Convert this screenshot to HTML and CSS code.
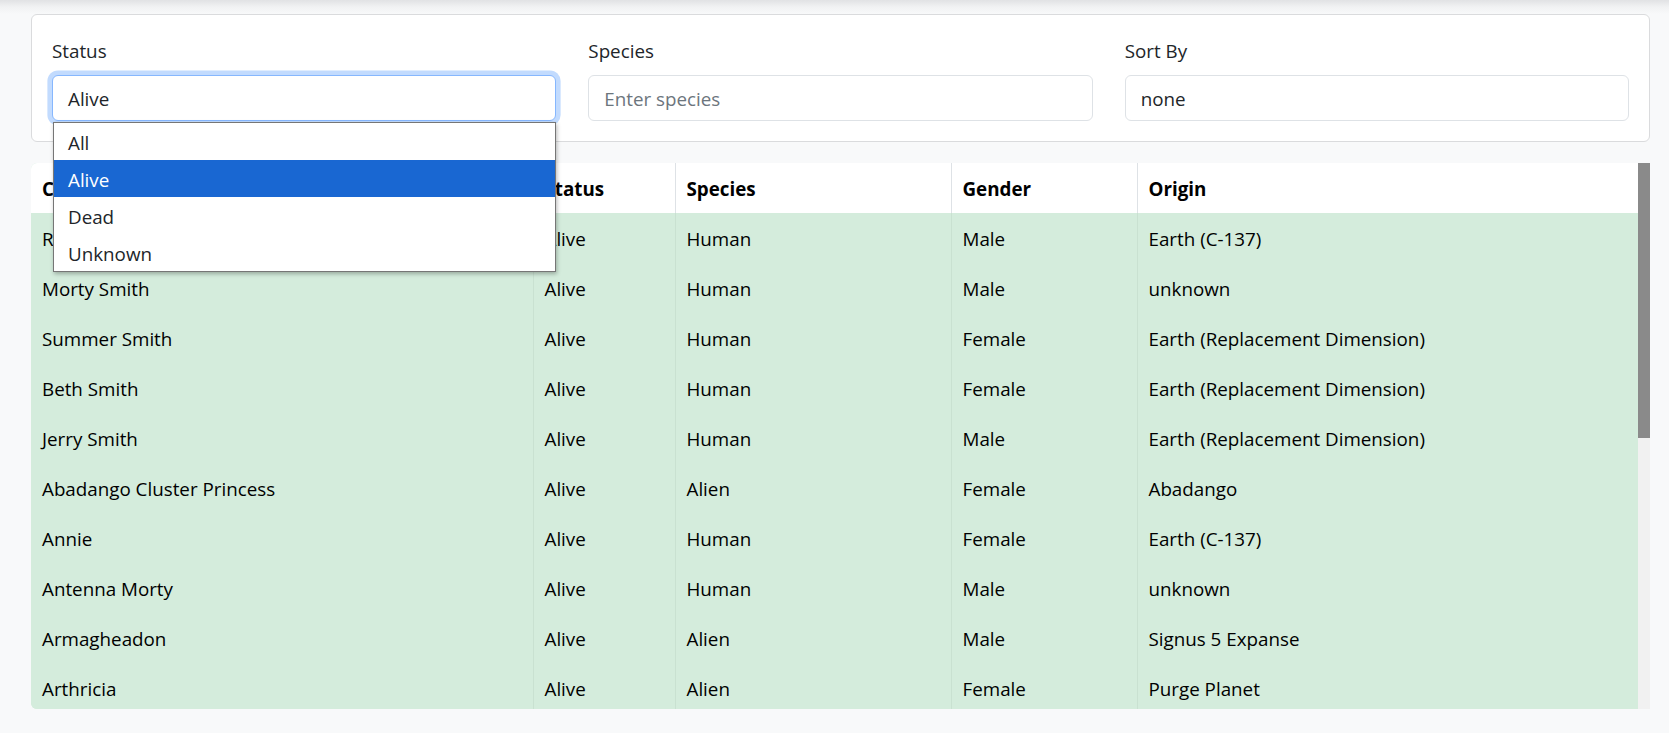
FILE: index.html
```html
<!DOCTYPE html>
<html lang="en">
<head>
<meta charset="utf-8">
<title>Characters</title>
<link rel="stylesheet" href="styles.css">
</head>
<body>
<div class="page">
  <section class="filters">
    <div class="field">
      <label class="field-label">Status</label>
      <div class="select-wrap">
        <div class="control is-focused">Alive</div>
        <ul class="dropdown">
          <li class="option">All</li>
          <li class="option is-selected">Alive</li>
          <li class="option">Dead</li>
          <li class="option">Unknown</li>
        </ul>
      </div>
    </div>
    <div class="field">
      <label class="field-label" for="species">Species</label>
      <input id="species" class="control" type="text" placeholder="Enter species">
    </div>
    <div class="field">
      <label class="field-label">Sort By</label>
      <div class="control">none</div>
    </div>
  </section>

  <div class="table-shell">
    <div class="table-wrap">
      <table class="characters">
        <colgroup>
          <col class="c-name"><col class="c-status"><col class="c-species"><col class="c-gender"><col class="c-origin">
        </colgroup>
        <thead>
          <tr><th>Character</th><th>Status</th><th>Species</th><th>Gender</th><th>Origin</th></tr>
        </thead>
        <tbody>
          <tr><td>Rick Sanchez</td><td>Alive</td><td>Human</td><td>Male</td><td>Earth (C-137)</td></tr>
          <tr><td>Morty Smith</td><td>Alive</td><td>Human</td><td>Male</td><td>unknown</td></tr>
          <tr><td>Summer Smith</td><td>Alive</td><td>Human</td><td>Female</td><td>Earth (Replacement Dimension)</td></tr>
          <tr><td>Beth Smith</td><td>Alive</td><td>Human</td><td>Female</td><td>Earth (Replacement Dimension)</td></tr>
          <tr><td>Jerry Smith</td><td>Alive</td><td>Human</td><td>Male</td><td>Earth (Replacement Dimension)</td></tr>
          <tr><td>Abadango Cluster Princess</td><td>Alive</td><td>Alien</td><td>Female</td><td>Abadango</td></tr>
          <tr><td>Annie</td><td>Alive</td><td>Human</td><td>Female</td><td>Earth (C-137)</td></tr>
          <tr><td>Antenna Morty</td><td>Alive</td><td>Human</td><td>Male</td><td>unknown</td></tr>
          <tr><td>Armagheadon</td><td>Alive</td><td>Alien</td><td>Male</td><td>Signus 5 Expanse</td></tr>
          <tr><td>Arthricia</td><td>Alive</td><td>Alien</td><td>Female</td><td>Purge Planet</td></tr>
          <tr><td>Artist Morty</td><td>Alive</td><td>Human</td><td>Male</td><td>unknown</td></tr>
          <tr><td>Attila Starwar</td><td>Alive</td><td>Human</td><td>Male</td><td>unknown</td></tr>
          <tr><td>Baby Legs</td><td>Alive</td><td>Human</td><td>Male</td><td>unknown</td></tr>
          <tr><td>Baby Poopybutthole</td><td>Alive</td><td>Poopybutthole</td><td>Male</td><td>unknown</td></tr>
          <tr><td>Benjamin</td><td>Alive</td><td>Poopybutthole</td><td>Male</td><td>Interdimensional Cable</td></tr>
          <tr><td>Bill</td><td>Alive</td><td>Human</td><td>Male</td><td>Earth (C-137)</td></tr>
          <tr><td>Blim Blam</td><td>Alive</td><td>Alien</td><td>Male</td><td>unknown</td></tr>
          <tr><td>Bruce Chutback</td><td>Alive</td><td>Human</td><td>Male</td><td>unknown</td></tr>
          <tr><td>Calypso</td><td>Alive</td><td>Human</td><td>Female</td><td>unknown</td></tr>
          <tr><td>Coach Feratu</td><td>Alive</td><td>Mythological Creature</td><td>Male</td><td>unknown</td></tr>
        </tbody>
      </table>
    </div>
    <div class="scrollbar" aria-hidden="true"><div class="scrollbar-thumb"></div></div>
  </div>
</div>
</body>
</html>
```

FILE: styles.css
```css
* { box-sizing: border-box; }

html, body { margin: 0; padding: 0; }

body {
  font-family: "Open Sans", "Noto Sans", "Liberation Sans", sans-serif;
  font-size: 18.8px;
  line-height: 27.6px;
  color: #212529;
  background: #f8f9fa linear-gradient(to bottom, #e1e2e4 0, #f1f2f3 7px, #f8f9fa 14px) no-repeat;
  height: 733px;
  overflow: hidden;
}

.page {
  padding: 14px 19px 0 31px;
}

/* ---------- filter card ---------- */
.filters {
  display: grid;
  grid-template-columns: repeat(3, 1fr);
  column-gap: 32px;
  padding: 23px 20px 20px 20px;
  background: #fff;
  border: 1px solid #dadbdd;
  border-radius: 6px;
}

.field-label {
  display: block;
  margin-bottom: 9px;
  color: #212529;
}

.select-wrap {
  position: relative;
}

.control {
  display: block;
  width: 100%;
  height: 46px;
  margin: 0;
  padding: 3px 15px 0 15px;
  font: inherit;
  line-height: 40px;
  color: #212529;
  background: #fff;
  border: 1px solid #dee2e6;
  border-radius: 6px;
  outline: none;
}

.control::placeholder {
  color: #6c757d;
  opacity: 1;
}

.control.is-focused {
  border-color: #86b7fe;
  box-shadow: 0 0 0 4.6px rgba(13, 110, 253, 0.25);
}

/* open list of the Status select */
.dropdown {
  position: absolute;
  top: 100%;
  left: 1px;
  right: 0;
  margin: 1px 0 0 0;
  padding: 0;
  list-style: none;
  background: #fff;
  border: 1px solid #767676;
  box-shadow: 1px 2px 4px rgba(0, 0, 0, 0.28);
  z-index: 10;
}

.option {
  height: 37px;
  padding: 4px 14px 0 14px;
  line-height: 33px;
  color: #212529;
}

.option.is-selected {
  background: #1967d2;
  color: #fff;
}

/* ---------- table ---------- */
.table-shell {
  display: flex;
  margin-top: 21px;
  height: 546px;
  border-radius: 6px 0 0 6px;
  overflow: hidden;
  background: #d4ecdc;
}

.table-wrap {
  flex: 1;
  min-width: 0;
  overflow: hidden;
}

.scrollbar {
  flex: 0 0 12px;
  display: flex;
  flex-direction: column;
  background: #f1f1f1;
}

.scrollbar-thumb {
  height: 275px;
  background: #8a8a8a;
}

.characters {
  width: 100%;
  table-layout: fixed;
  border-collapse: collapse;
  color: #000;
}

.c-name { width: 502px; }
.c-status { width: 142px; }
.c-species { width: 276px; }
.c-gender { width: 186px; }
.c-origin { width: auto; }

.characters th,
.characters td {
  height: 50px;
  padding: 12px 11px 10px 11px;
  line-height: 28px;
  text-align: left;
  white-space: nowrap;
  overflow: hidden;
}

.characters th {
  background: #fff;
  font-weight: 700;
  border-left: 1px solid #dee2e6;
}

.characters td {
  font-weight: 400;
  background: #d4ecdc;
  border-left: 1px solid #c9e1d1;
}

.characters th:first-child,
.characters td:first-child {
  border-left: none;
}
```
